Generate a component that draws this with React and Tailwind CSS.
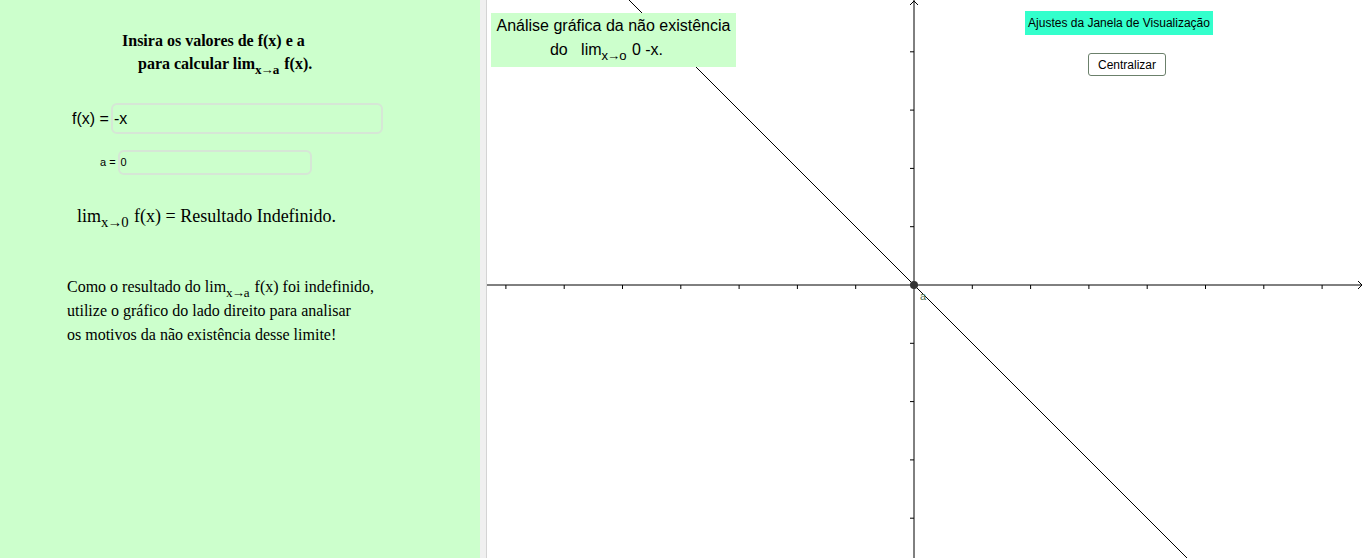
import React from "react";

const serif = { fontFamily: '"Liberation Serif", "Times New Roman", serif' };

const Lim = ({ sub }) => (
  <span>
    lim<sub className="text-[0.82em] relative top-[5px] align-baseline tracking-[-1px] mr-[2px]">{sub}</sub>
  </span>
);

const Graph = () => {
  const ox = 427;
  const oy = 285;
  const step = 58.3;
  const xs = [];
  for (let k = -7; k <= 7; k++) if (k !== 0) xs.push(ox + k * step);
  const ys = [];
  for (let k = -4; k <= 4; k++) if (k !== 0) ys.push(oy + k * step);

  return (
    <svg width="879" height="558" className="absolute inset-0">
      {/* axes */}
      <line x1="0" y1={oy} x2="875" y2={oy} stroke="#000" strokeWidth="1" />
      <polyline points="871,281 875,285 871,289" fill="none" stroke="#000" strokeWidth="1" />
      <line x1={ox} y1="0" x2={ox} y2="558" stroke="#000" strokeWidth="1" />
      <polyline points="423,5 427,1 431,5" fill="none" stroke="#000" strokeWidth="1" />
      {xs.map((x) => (
        <line key={x} x1={x} y1={oy} x2={x} y2={oy + 4} stroke="#000" strokeWidth="1" />
      ))}
      {ys.map((y) => (
        <line key={y} x1={ox - 4} y1={y} x2={ox} y2={y} stroke="#000" strokeWidth="1" />
      ))}
      {/* f(x) = -x */}
      <line x1={ox - oy} y1="0" x2={ox + (558 - oy)} y2="558" stroke="#000" strokeWidth="1" />
      <circle cx={ox} cy={oy} r="4" fill="#333333" />
      <text x={ox + 6} y={oy + 15} fontSize="11" fill="#4d704d" fontFamily="Liberation Sans, Arial, sans-serif">
        a
      </text>
    </svg>
  );
};

export default function App() {
  return (
    <div className="flex w-[1366px] h-[558px] overflow-hidden bg-white" style={{ fontFamily: '"Liberation Sans", Arial, sans-serif' }}>
      {/* left panel */}
      <div className="w-[480px] h-full bg-[#ccffcc] flex flex-col text-black">
        <div style={serif} className="font-bold text-[16px] leading-[23px] pt-[29px]">
          <div className="ml-[122px]">Insira os valores de f(x) e a</div>
          <div className="ml-[138px]">
            para calcular <Lim sub="x→a" /> f(x).
          </div>
        </div>

        <div className="flex items-center mt-[28px] ml-[72px]">
          <span className="text-[16px] mr-[2px]">f(x) =</span>
          <div className="w-[272px] h-[31px] border-2 border-[#d6e6d6] rounded-md flex items-center px-[1px] text-[16px]">
            -x
          </div>
        </div>

        <div className="flex items-center mt-[16px] ml-[100px]">
          <span className="text-[11px] mr-[2px]">a =</span>
          <div className="w-[194px] h-[25px] border-2 border-[#d6e6d6] rounded-md flex items-center px-[1px] text-[11px]">
            0
          </div>
        </div>

        <div style={serif} className="text-[18px] mt-[28px] ml-[77px]">
          <Lim sub="x→0" /> f(x) = Resultado Indefinido.
        </div>

        <div style={serif} className="text-[16px] leading-[24px] mt-[45px] ml-[67px]">
          <div>
            Como o resultado do <Lim sub="x→a" /> f(x) foi indefinido,
          </div>
          <div>utilize o gráfico do lado direito para analisar</div>
          <div>os motivos da não existência desse limite!</div>
        </div>
      </div>

      {/* divider */}
      <div className="w-[7px] h-full bg-[#f0f0f0] border-r border-[#d4d4d4]" />

      {/* graphics view */}
      <div className="relative flex-1 h-full bg-white">
        <Graph />

        <div className="absolute left-[4px] top-[13px] w-[245px] h-[54px] bg-[#ccffcc] text-[16px] leading-[24px] text-center pt-[1px]">
          <div>Análise gráfica da não existência</div>
          <div className="pr-[14px]">
            do&nbsp;&nbsp;&nbsp;<Lim sub="x→o" /> 0 -x.
          </div>
        </div>

        <div className="absolute left-[538px] top-[11px] w-[188px] h-[24px] bg-[#33ffcc] text-[12px] flex items-center justify-center">
          Ajustes da Janela de Visualização
        </div>

        <div className="absolute left-[601px] top-[53px] w-[78px] h-[23px] bg-white border border-[#6b806b] rounded-[3px] text-[12px] flex items-center justify-center">
          Centralizar
        </div>
      </div>
    </div>
  );
}
